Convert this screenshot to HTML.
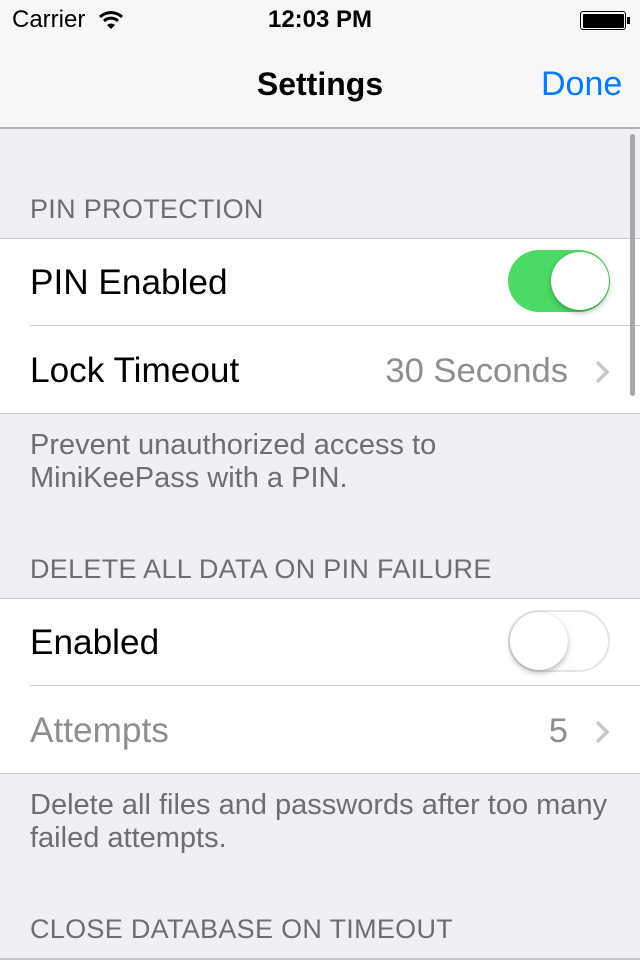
<!DOCTYPE html>
<html><head><meta charset="utf-8"><style>
*{margin:0;padding:0;box-sizing:border-box}
body{width:640px;height:960px;overflow:hidden;background:#efeff4;font-family:"Liberation Sans",sans-serif;position:relative}
.abs{position:absolute}
.nav{left:0;top:0;width:640px;height:129px;background:#f7f7f7;border-bottom:2px solid #b2b2b2}
.hdr{left:30px;font-size:27px;color:#6d6d72;letter-spacing:0.3px}
.grp{left:0;width:640px;height:176px;background:#fff;border-top:1px solid #c8c7cc;border-bottom:1px solid #c8c7cc}
.sep{left:30px;width:610px;height:1px;background:#c8c7cc}
.lbl{left:30px;font-size:35.2px;color:#000}
.ftr{left:30px;font-size:29px;color:#6d6d72;line-height:33px}
.val{font-size:34.6px;color:#8e8e93}
.sw{width:102px;height:62px;border-radius:31px}
.knob{width:58px;height:58px;border-radius:50%;background:#fff;box-shadow:0 3px 6px rgba(0,0,0,.25),0 0 1px rgba(0,0,0,.2)}
</style></head><body>
<div class="abs nav"></div>
<div class="abs" style="left:12px;top:6px;font-size:24px">Carrier</div>
<svg class="abs" style="left:98px;top:9px" width="26" height="22" viewBox="0 0 26 22"><path d="M2 8a16 16 0 0 1 22 0" stroke="#000" stroke-width="3" fill="none"/><path d="M6 12a10 10 0 0 1 14 0" stroke="#000" stroke-width="3" fill="none"/><path d="M13 20l-4-4a6 6 0 0 1 8 0z" fill="#000"/></svg>
<div class="abs" style="left:0;width:640px;text-align:center;top:6px;font-size:24px;font-weight:bold">12:03 PM</div>
<div class="abs" style="left:580px;top:11px;width:46px;height:19px;border:1.5px solid #000;border-radius:3px;padding:1.5px"><div style="width:100%;height:100%;background:#000;border-radius:1px"></div></div>
<div class="abs" style="left:627px;top:17px;width:3px;height:7px;background:#000"></div>
<div class="abs" style="left:0;width:640px;text-align:center;top:66px;font-size:32px;font-weight:bold">Settings</div>
<div class="abs" style="left:541px;top:65px;font-size:34px;color:#007aff">Done</div>

<div class="abs hdr" style="top:194px">PIN PROTECTION</div>
<div class="abs grp" style="top:238px"></div>
<div class="abs lbl" style="top:263px">PIN Enabled</div>
<div class="abs sw" style="left:508px;top:250px;background:#4cd964"><div class="abs knob" style="left:43px;top:2px"></div></div>
<div class="abs sep" style="top:325px"></div>
<div class="abs lbl" style="top:351px">Lock Timeout</div>
<div class="abs val" style="right:72px;top:352px">30 Seconds</div>
<svg class="abs" style="left:594px;top:360px" width="16" height="24"><path d="M3 2l10 10-10 10" stroke="#c7c7cc" stroke-width="3.5" fill="none"/></svg>
<div class="abs ftr" style="top:429px">Prevent unauthorized access to<br>MiniKeePass with a PIN.</div>

<div class="abs hdr" style="top:554px">DELETE ALL DATA ON PIN FAILURE</div>
<div class="abs grp" style="top:598px"></div>
<div class="abs lbl" style="top:623px">Enabled</div>
<div class="abs sw" style="left:508px;top:610px;background:#fff;border:2px solid #e5e5e5"><div class="abs knob" style="left:0;top:0"></div></div>
<div class="abs sep" style="top:685px"></div>
<div class="abs lbl" style="top:711px;color:#8e8e93">Attempts</div>
<div class="abs val" style="right:72px;top:712px">5</div>
<svg class="abs" style="left:594px;top:720px" width="16" height="24"><path d="M3 2l10 10-10 10" stroke="#c7c7cc" stroke-width="3.5" fill="none"/></svg>
<div class="abs ftr" style="top:789px">Delete all files and passwords after too many<br>failed attempts.</div>

<div class="abs hdr" style="top:914px">CLOSE DATABASE ON TIMEOUT</div>
<div class="abs" style="left:0;top:958px;width:640px;height:2px;background:#c8c7cc"></div>
<div class="abs" style="left:630px;top:134px;width:5px;height:262px;border-radius:3px;background:#a8a8a8"></div>
</body></html>
